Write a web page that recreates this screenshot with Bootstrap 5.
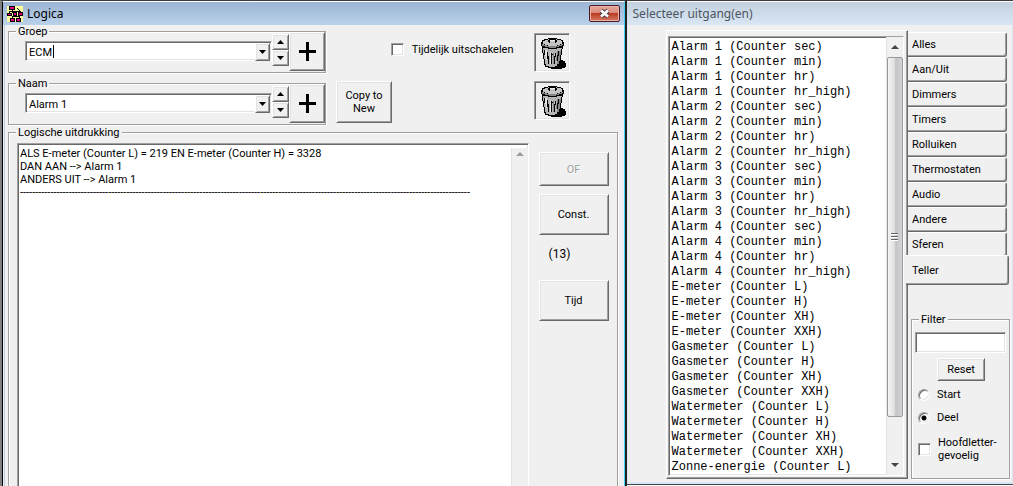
<!DOCTYPE html>
<html lang="nl">
<head>
<meta charset="utf-8">
<meta name="viewport" content="width=device-width, initial-scale=1">
<title>Logica</title>
<link href="https://cdn.jsdelivr.net/npm/bootstrap@5.3.0/dist/css/bootstrap.min.css" rel="stylesheet">
<style>
  :root { --face: #f0f0f0; --line: #a0a0a0; --dark: #696969; --lite: #e3e3e3; }
  html, body { height: 100%; }
  body { background: #fff; color: #000; font-family: Roboto, "Liberation Sans", Arial, sans-serif; font-size: 11px; line-height: 13px; overflow: hidden; }
  button, input, select, textarea { font: inherit; color: #000; border-radius: 0; }
  .win { background: var(--face); border-top: 1px solid #3c3c40; min-width: 0; }
  .win-logic { flex: 625 1 0; height: calc(100vh + 24px); border-left: 2px solid #808080; border-right: 2px solid #222; box-shadow: inset 1px 0 #000, inset 2px 0 #f0f0f0, inset 3px 0 #b9d1ea, inset -1px 0 #3fd0f8, inset -2px 0 #e8f1fa; }
  .win-output { flex: 388 1 0; height: calc(100vh - 1px); border-bottom: 1px solid #444; box-shadow: inset 1px 0 #d9e6f5, inset -1px 0 #d9e6f5, inset 0 -2px #d9e6f5; }
  .title-bar { height: 24px; flex-shrink: 0; font-family: "Noto Sans", "Open Sans", sans-serif; font-size: 12px; line-height: 16px; border-top: 1px solid #fff; }
  .title-main { background: linear-gradient(#9bb5d3, #bad1ea); padding: 0 4px 0 4px; border-left: 1px solid #000; border-right: 1px solid #3fd0f8; }
  .title-side { background: linear-gradient(#c3d0de, #d9e6f4); color: #4c5560; padding: 0 6px; }
  .close-x { width: 31px; height: 17px; border: 1px solid #4d1822; border-radius: 2px; background: linear-gradient(#e6a79a 0, #d8887a 48%, #bd3b22 50%, #d27a62 100%); box-shadow: inset 0 0 0 1px #e9b5aa; }
  .raised { background: var(--face); border: 1px solid; border-color: #fff var(--dark) var(--dark) #fff; box-shadow: inset 1px 1px var(--lite), inset -1px -1px var(--line); padding: 0; }
  .raised:disabled { color: var(--line); text-shadow: 1px 1px #fff; }
  .sunken { background: #fff; border: 1px solid; border-color: var(--line) #fff #fff var(--line); box-shadow: inset 1px 1px var(--dark), inset -1px -1px var(--lite); }
  .group { border: 1px solid var(--line); box-shadow: 1px 1px #fff, inset 1px 1px #fff; min-width: 0; }
  .group > legend { float: none; width: auto; font-size: 11px; line-height: 13px; margin: 0 0 0 7px; padding: 0 2px; background: var(--face); }
  .logic-body { padding: 0 7px 0 6px; }
  .top-row { height: 48px; }
  .top-row .group { width: 318px; height: 48px; }
  .group-row { height: 39px; margin-top: -6px; padding-left: 16px; }
  .combo { height: 20px; margin-top: 9px; position: relative; padding: 1px; }
  .combo select { appearance: none; border: 0; outline: 0; background: transparent; padding: 0 2px; height: 18px; width: 100%; }
  .combo-arrow { width: 15px; height: 18px; pointer-events: none; }
  .caret-bar { position: absolute; left: 27px; top: 3px; width: 1px; height: 13px; background: #000; }
  .spin { width: 17px; margin-top: 2px; }
  .spin button { height: 16px; }
  .add-btn { width: 36px; height: 39px; }
  .copy-btn { width: 56px; height: 42px; margin-left: 10px; }
  .trash { width: 36px; height: 39px; background: var(--face); padding: 0; margin-right: 48px; }
  .off-check { margin-right: 20px; }
  .tick { appearance: none; width: 13px; height: 13px; margin: 0; }
  .expr-group { margin-top: 1px; }
  .expr-box { margin: 4px 0 0 8px; }
  .expr-box textarea { border: 0; outline: 0; resize: none; overflow: hidden; background: transparent; padding: 3px 0 0 2px; white-space: pre; }
  .track { width: 17px; background: #f0f0f0; border-left: 1px solid #e3e3e3; }
  .side-col { width: 70px; margin: 13px 8px 0 10px; }
  .side-count { padding: 13px 0 19px 10px; font-size: 12px; }
  .page { margin-left: 39px; padding: 5px 3px 2px 1px; min-height: 0; border: 1px solid; border-color: #fff var(--dark) var(--dark) #fff; box-shadow: inset -1px -1px var(--line); }
  .output-body { min-height: 0; padding: 5px 0; }
  .list-font { appearance: none; font-family: "Liberation Mono", "Courier New", monospace; font-size: 12px; line-height: 15px; border: 0; outline: 0; background: transparent; overflow: hidden; padding: 3px 0 0 3px; min-height: 0; scrollbar-width: none; }
  .list-font::-webkit-scrollbar { display: none; }
  .list-font option { padding: 0; min-height: 15px; height: 15px; line-height: 15px; }
  .thumb { flex: 361 1 0; border: 1px solid #999; border-radius: 2px; background: linear-gradient(90deg, #f4f4f4, #e0e0e2 45%, #c4c4c8 55%, #d4d4d8); }
  .thumb-rest { flex: 58 1 0; }
  .tab-col { width: 105px; padding-top: 2px; }
  .tabs button { height: 25px; width: 99px; text-align: left; background: var(--face); border: 0; border-top: 1px solid #fff; border-right: 1px solid var(--dark); border-bottom: 1px solid var(--dark); box-shadow: inset -1px -1px var(--line); border-radius: 0 3px 3px 0; padding: 0 0 0 4px; }
  .tabs button.active { width: 103px; height: 30px; margin: -2px 0 0 -2px; padding-left: 6px; z-index: 1; }
  .filter-group { margin: 28px 3px 0; height: 166px; }
  .filter-body { padding: 6px 3px 0; }
  .filter-body .sunken.field { height: 21px; width: 100%; }
  .reset { width: 48px; height: 23px; margin: 5px 0 0 22px; }
  .dot { appearance: none; width: 12px; height: 12px; margin: 0; border-radius: 50%; }
  .dot:checked { background: radial-gradient(circle, #000 2px, #fff 3px); }
  .opt { gap: 7px; margin: 7px 0 0 3px; }
  .opt + .opt { margin-top: 10px; }
  .opt.opt-case { margin-top: 12px; }
</style>
</head>
<body>
<main class="d-flex align-items-start">
  <section class="win win-logic d-flex flex-column">
    <header class="title-bar title-main d-flex align-items-center">
      <svg width="16" height="16" viewBox="0 0 16 16" shape-rendering="crispEdges" aria-hidden="true">
        <path fill="#ffffa0" d="M0 0h16v16H0z"/>
        <path fill="none" stroke="#000" d="M5 3v3.500M2.500 7V5.500h11V7M8.500 5v6M5 12v-1.500h7V12M3 4l4-2M10 2l3 3"/>
        <path fill="#000" d="M2 0h6v4H2zM0 7h5v3H0zM6 6h4v4H6zM11 6h5v4h-5zM3 12h5v4H3zM9 12h5v4H9z"/>
        <path fill="#e0007c" d="M3 1h4v2H3zM1 8h3v1H1zM7 7h2v2H7zM12 7h3v2h-3zM4 13h3v2H4zM10 13h3v2h-3z"/>
      </svg>
      <span class="ms-1">Logica</span>
      <button class="close-x ms-auto p-0 d-flex align-items-center justify-content-center" type="button" aria-label="Sluiten">
        <svg width="13" height="11" viewBox="0 0 13 11"><path d="M3 2.500l7 6M10 2.500l-7 6" stroke="#4b3a48" stroke-width="4.600"/><path d="M3 2.500l7 6M10 2.500l-7 6" stroke="#fff" stroke-width="2.800"/></svg>
      </button>
    </header>
    <div class="logic-body d-flex flex-column flex-grow-1">
      <div class="top-row d-flex">
        <fieldset class="group">
          <legend>Groep</legend>
          <div class="group-row d-flex">
            <div class="combo sunken d-flex flex-grow-1">
              <select aria-label="Groep"><option>ECM</option></select><span class="caret-bar"></span>
              <span class="combo-arrow raised d-flex align-items-center justify-content-center flex-shrink-0"><svg width="7" height="4" viewBox="0 0 7 4"><path d="M0 0h7L3.500 4z"/></svg></span>
            </div>
            <div class="spin d-flex flex-column">
              <button class="raised d-flex align-items-center justify-content-center" type="button" aria-label="Vorige groep"><svg width="7" height="4" viewBox="0 0 7 4"><path d="M0 4h7L3.500 0z"/></svg></button>
              <button class="raised d-flex align-items-center justify-content-center" type="button" aria-label="Volgende groep"><svg width="7" height="4" viewBox="0 0 7 4"><path d="M0 0h7L3.500 4z"/></svg></button>
            </div>
            <button class="add-btn raised" type="button" aria-label="Groep toevoegen"><svg width="17" height="19" viewBox="0 0 17 19"><path d="M7 0h3v8h7v3h-7v8H7v-8H0V8h7z"/></svg></button>
          </div>
        </fieldset>
        <div class="off-check d-flex align-items-center ms-auto">
          <input class="tick sunken" type="checkbox" id="uit"><label class="ms-1 ps-1" for="uit">Tijdelijk uitschakelen</label>
        </div>
        <button class="trash sunken mt-2 flex-shrink-0" type="button" aria-label="Groep verwijderen">
          <svg width="32" height="34" viewBox="0 0 32 34" shape-rendering="crispEdges">
            <g id="bin">
              <path d="M20 24h7v1h2v2h1v4h-1v1h-3v1H15v-4h4z"/>
              <path d="M6 9h21v4h-1v6h-1v6h-1v4h-2v2h-3v1h-7v-1H9v-2H8v-6H7v-6H6z"/>
              <path fill="#b4b4b4" d="M7 12h19v1h-1v6h-1v6h-1v3h-2v2h-2v1h-6v-1h-3v-2H9v-5H8v-6H7z"/>
              <path fill="#e6e6e6" d="M9 14h2v10h-1v-4H9zM14 16h1v12h-1z"/>
              <path fill="#848484" d="M21 15h4v4h-1v6h-1v3h-2v-3h-1v-4h1zM17 17h1v11h-1z"/>
              <path d="M11 16h1v4h1v8h-1v-5h-1zM15 17h1v1h1v1h-1v9h-1zM19 17h1v4h-1v7h-1v-8h1zM22 15h1v5h-1v5h-1v-6h1zM8 14h1v5H8z"/>
              <path d="M12 2h9v1h4v1h2v2h1v4h-1v1h-2v1h-4v1h-9v-1H8v-1H6v-1H5V6h1V4h2V3h4z"/>
              <path fill="#c4c4c4" d="M12 3h9v1h4v1h1v3h-2v1h-3v1h-9V9H9V8H7V5h2V4h3z"/>
              <path fill="#868686" d="M6 8h2v1h3v1h11V9h3V8h2v1h-1v1h-3v1h-3v1h-7v-1h-4v-1H6z"/>
              <path d="M13 3h7v1h1v2h-1v1h-1V5h-5v2h-1V6h-1V4h1z"/><path fill="#eee" d="M14 4h5v1h-5z"/>
            </g>
          </svg>
        </button>
      </div>
      <div class="top-row d-flex mt-1">
        <fieldset class="group">
          <legend>Naam</legend>
          <div class="group-row d-flex">
            <div class="combo sunken d-flex flex-grow-1">
              <select aria-label="Naam"><option>Alarm 1</option></select>
              <span class="combo-arrow raised d-flex align-items-center justify-content-center flex-shrink-0"><svg width="7" height="4" viewBox="0 0 7 4"><path d="M0 0h7L3.500 4z"/></svg></span>
            </div>
            <div class="spin d-flex flex-column">
              <button class="raised d-flex align-items-center justify-content-center" type="button" aria-label="Vorige naam"><svg width="7" height="4" viewBox="0 0 7 4"><path d="M0 4h7L3.500 0z"/></svg></button>
              <button class="raised d-flex align-items-center justify-content-center" type="button" aria-label="Volgende naam"><svg width="7" height="4" viewBox="0 0 7 4"><path d="M0 0h7L3.500 4z"/></svg></button>
            </div>
            <button class="add-btn raised" type="button" aria-label="Naam toevoegen"><svg width="17" height="19" viewBox="0 0 17 19"><path d="M7 0h3v8h7v3h-7v8H7v-8H0V8h7z"/></svg></button>
          </div>
        </fieldset>
        <button class="copy-btn raised mt-1 flex-shrink-0" type="button">Copy to<br>New</button>
        <button class="trash sunken mt-1 ms-auto flex-shrink-0" type="button" aria-label="Naam verwijderen">
          <svg width="32" height="34" viewBox="0 0 32 34" shape-rendering="crispEdges"><use href="#bin"/></svg>
        </button>
      </div>
      <fieldset class="group expr-group flex-grow-1">
        <legend>Logische uitdrukking</legend>
        <div class="d-flex h-100">
          <div class="expr-box sunken d-flex flex-grow-1 p-0">
            <textarea class="flex-grow-1" aria-label="Logische uitdrukking" spellcheck="false">ALS E-meter (Counter L) = 219 EN E-meter (Counter H) = 3328
DAN AAN --> Alarm 1
ANDERS UIT --> Alarm 1
----------------------------------------------------------------------------------------------------------------------------------------------------</textarea>
            <div class="track text-center pt-1 mt-1"><svg class="d-block mx-auto" width="8" height="4" viewBox="0 0 8 4"><path fill="#999" d="M0 4h8L4 0z"/></svg></div>
          </div>
          <div class="side-col d-flex flex-column flex-shrink-0">
            <button class="raised" type="button" disabled style="height:34px">OF</button>
            <button class="raised mt-2" type="button" style="height:41px">Const.</button>
            <div class="side-count">(13)</div>
            <button class="raised" type="button" style="height:41px">Tijd</button>
          </div>
        </div>
      </fieldset>
    </div>
  </section>

  <section class="win win-output d-flex flex-column">
    <header class="title-bar title-side d-flex align-items-center">Selecteer uitgang(en)</header>
    <div class="output-body d-flex flex-grow-1">
      <div class="page d-flex flex-grow-1">
        <div class="sunken d-flex flex-grow-1">
          <select class="list-font flex-grow-1" size="29" aria-label="Uitgangen">
            <option>Alarm 1 (Counter sec)</option><option>Alarm 1 (Counter min)</option><option>Alarm 1 (Counter hr)</option><option>Alarm 1 (Counter hr_high)</option>
            <option>Alarm 2 (Counter sec)</option><option>Alarm 2 (Counter min)</option><option>Alarm 2 (Counter hr)</option><option>Alarm 2 (Counter hr_high)</option>
            <option>Alarm 3 (Counter sec)</option><option>Alarm 3 (Counter min)</option><option>Alarm 3 (Counter hr)</option><option>Alarm 3 (Counter hr_high)</option>
            <option>Alarm 4 (Counter sec)</option><option>Alarm 4 (Counter min)</option><option>Alarm 4 (Counter hr)</option><option>Alarm 4 (Counter hr_high)</option>
            <option>E-meter (Counter L)</option><option>E-meter (Counter H)</option><option>E-meter (Counter XH)</option><option>E-meter (Counter XXH)</option>
            <option>Gasmeter (Counter L)</option><option>Gasmeter (Counter H)</option><option>Gasmeter (Counter XH)</option><option>Gasmeter (Counter XXH)</option>
            <option>Watermeter (Counter L)</option><option>Watermeter (Counter H)</option><option>Watermeter (Counter XH)</option><option>Watermeter (Counter XXH)</option>
            <option>Zonne-energie (Counter L)</option>
          </select>
          <div class="track d-flex flex-column align-items-stretch flex-shrink-0">
            <svg class="mx-auto my-2" width="8" height="4" viewBox="0 0 8 4"><path fill="#444" d="M0 4h8L4 0z"/></svg>
            <div class="thumb d-flex align-items-center justify-content-center"><svg width="8" height="8" viewBox="0 0 8 8" shape-rendering="crispEdges"><path fill="#666" d="M0 0h7v1H0zM0 3h7v1H0zM0 6h7v1H0z"/><path fill="#fff" d="M0 1h7v1H0zM0 4h7v1H0zM0 7h7v1H0z"/></svg></div>
            <div class="thumb-rest d-flex align-items-end justify-content-center"><svg class="my-2" width="8" height="4" viewBox="0 0 8 4"><path fill="#444" d="M0 0h8L4 4z"/></svg></div>
          </div>
        </div>
      </div>
      <div class="tab-col flex-shrink-0">
        <nav class="tabs d-flex flex-column" aria-label="Soort">
          <button type="button">Alles</button><button type="button">Aan/Uit</button><button type="button">Dimmers</button><button type="button">Timers</button><button type="button">Rolluiken</button><button type="button">Thermostaten</button><button type="button">Audio</button><button type="button">Andere</button><button type="button">Sferen</button><button type="button" class="active">Teller</button>
        </nav>
        <fieldset class="group filter-group">
          <legend>Filter</legend>
          <div class="filter-body">
            <input class="sunken field d-block" type="text" aria-label="Filter">
            <button class="reset raised d-block" type="button">Reset</button>
            <div class="opt d-flex align-items-center"><input class="dot sunken" type="radio" name="m" id="start"><label for="start">Start</label></div>
            <div class="opt d-flex align-items-center"><input class="dot sunken" type="radio" name="m" id="deel" checked><label for="deel">Deel</label></div>
            <div class="opt opt-case d-flex align-items-center"><input class="tick sunken flex-shrink-0" type="checkbox" id="hoofd"><label for="hoofd">Hoofdletter-<br>gevoelig</label></div>
          </div>
        </fieldset>
      </div>
    </div>
  </section>
</main>
<script src="https://cdn.jsdelivr.net/npm/bootstrap@5.3.0/dist/js/bootstrap.bundle.min.js"></script>
</body>
</html>
